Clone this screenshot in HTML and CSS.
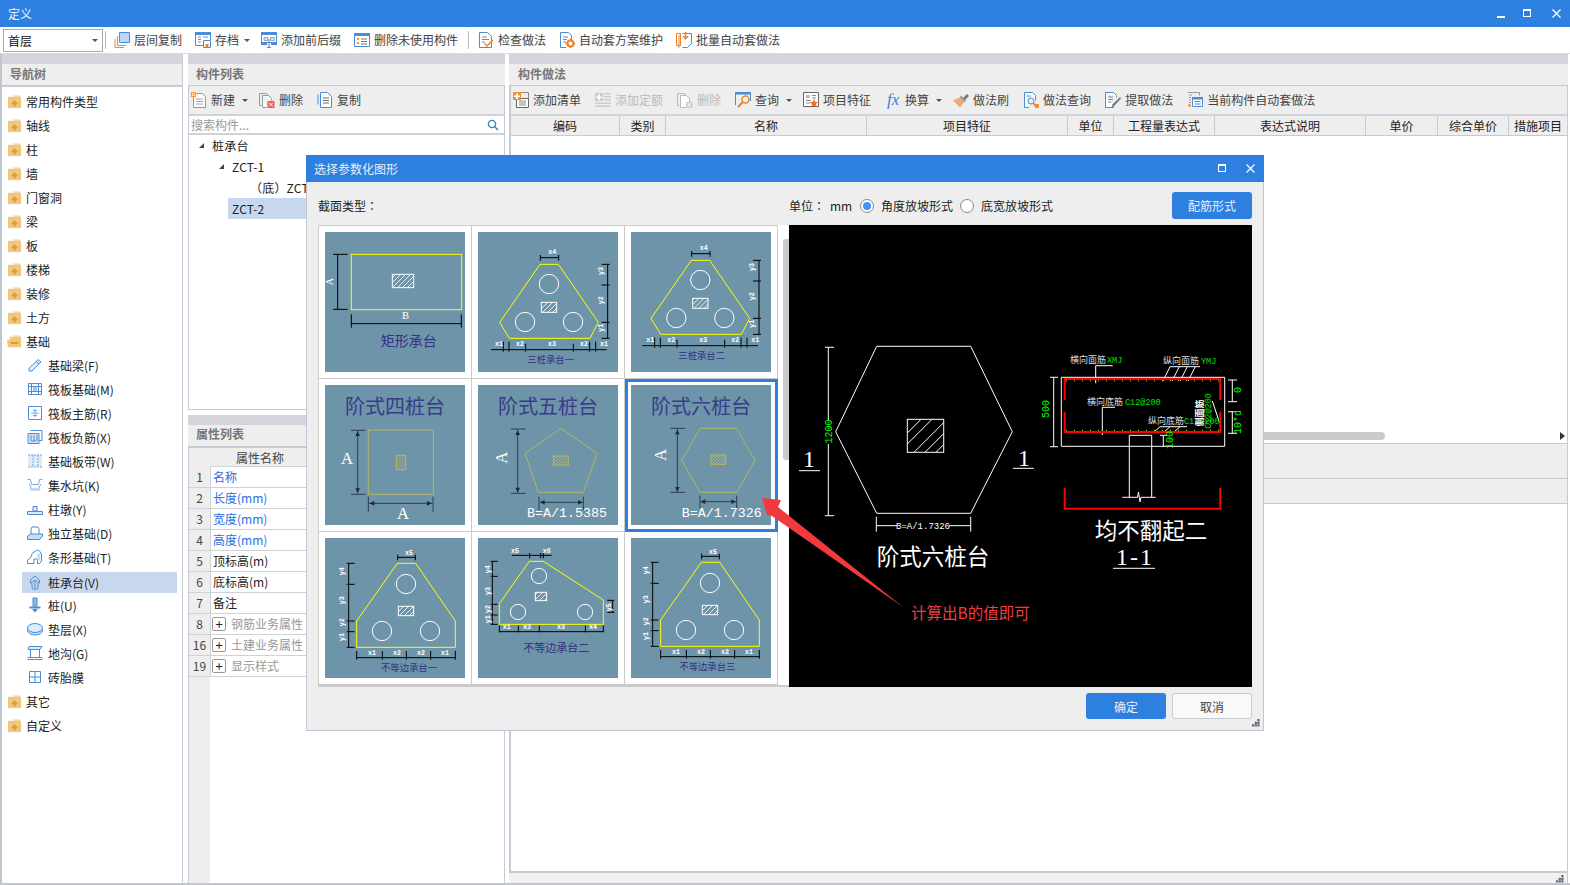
FILE: index.html
```html
<!DOCTYPE html>
<html lang="zh-CN">
<head>
<meta charset="utf-8">
<title>定义</title>
<link rel="stylesheet" href="styles.css">
</head>
<body>
<svg class="defs" width="0" height="0" aria-hidden="true">
  <defs>
    <pattern id="hatchW" width="15" height="15" patternUnits="userSpaceOnUse"><path d="M-2 17L17 -2" stroke="#fff" stroke-width="2.5"/></pattern>
    <pattern id="hatchO" width="9" height="9" patternUnits="userSpaceOnUse"><path d="M-2 11L11 -2" stroke="#b8ba55" stroke-width="2.5"/></pattern>
    <pattern id="hatchV" width="9" height="9" patternUnits="userSpaceOnUse"><path d="M-2 -2L11 11" stroke="#b8ba55" stroke-width="2.5"/></pattern>

    <!-- tree icons -->
    <symbol id="fplus" viewBox="0 0 16 16"><path d="M7 1.5h7v1.5H7z" fill="#f3d596"/><path d="M1 3h14v12H1z" fill="#efc67c"/><path d="M7 7h2v2h2v2H9v2H7v-2H5V9h2z" fill="#d39a2c"/></symbol>
    <symbol id="fminus" viewBox="0 0 16 16"><path d="M7 1.5h7v1.5H7z" fill="#f3d596"/><path d="M3 3h12v11H1L0 6h3z" fill="#efc67c"/><path d="M4 8.5h8v2H4z" fill="#d39a2c"/></symbol>
    <symbol id="beam" viewBox="0 0 16 16"><path d="M2 11.5L11 2.5l3 2.5-9 9H2zM9 4.5l3 2.5" fill="#dfeafa" stroke="#4a8cd8"/></symbol>
    <symbol id="raft" viewBox="0 0 16 16"><path d="M1.5 2.5h13v11h-13zM4.5 2.5v11M11.5 2.5v11M1.5 5.5h13M1.5 10.5h13M7 5.500v5M9 5.500v5" fill="none" stroke="#4a8cd8"/></symbol>
    <symbol id="rmain" viewBox="0 0 16 16"><path d="M1.500 1.500h13v13h-13z" fill="#fff" stroke="#4a8cd8"/><path d="M8 4v8M4 8h8M6 5.500h4M6 10.500h4" fill="none" stroke="#7aa8e0"/></symbol>
    <symbol id="rneg" viewBox="0 0 16 16"><path d="M1 4.500h11v10H1z" fill="#d4e3f7" stroke="#4a8cd8"/><path d="M3.500 1.500H15v10h-3" fill="none" stroke="#4a8cd8"/><path d="M4 6v6h5M7 6v6M10 6v6" fill="none" stroke="#4a8cd8"/></symbol>
    <symbol id="band" viewBox="0 0 16 16"><path d="M1 2h14v12H1z" fill="#dfeafa"/><path d="M1 2h14M1 14h14M6 2v12M11 2v12" fill="none" stroke="#7aa8e0" stroke-dasharray="2 1"/></symbol>
    <symbol id="sump" viewBox="0 0 16 16"><path d="M.5 2.500h3l1 5h7l1-5h3M2 7l3 5h6l3-5" fill="none" stroke="#7aa8e0"/><path d="M2 11l2 3h8l2-3z" fill="#c9d6e8"/></symbol>
    <symbol id="pier" viewBox="0 0 16 16"><path d="M6 5.500h4V10H6zM.5 10.500h15v3H.5z" fill="#dfeafa" stroke="#4a8cd8"/></symbol>
    <symbol id="iso" viewBox="0 0 16 16"><path d="M5 2h6l1 2v6H4V4z" fill="#fff" stroke="#4a8cd8"/><path d="M.5 11l3-2h12v2l-3 3.500H.5z" fill="#c8dcf6" stroke="#4a8cd8"/></symbol>
    <symbol id="strip" viewBox="0 0 16 16"><path d="M.5 14.500V11l3-2 2-5 5-3 2 1 2 3v7l-2 2.500h-2V10H7v4.500z" fill="#fff" stroke="#4a8cd8"/><path d="M10.500 4l3 1v6l-3 1z" fill="#c8dcf6"/></symbol>
    <symbol id="cap" viewBox="0 0 16 16"><path d="M8 1l4.500 4v3L8 5 3.500 8V5z" fill="#c8dcf6" stroke="#4a8cd8"/><path d="M5 8v5l2 2M8 5v10M11 8v5l-2 2" fill="none" stroke="#4a8cd8"/></symbol>
    <symbol id="pile" viewBox="0 0 16 16"><path d="M6 1h4v8H6z" fill="#8db8ec" stroke="#4a8cd8"/><path d="M2.500 10.500h11" stroke="#4a8cd8" stroke-width="2"/><path d="M5 12h6l-3 3.500z" fill="#4a8cd8"/></symbol>
    <symbol id="cushion" viewBox="0 0 16 16"><ellipse cx="8" cy="9.500" rx="7.500" ry="4.500" fill="#c8dcf6" stroke="#4a8cd8"/><ellipse cx="8" cy="7" rx="7.500" ry="4.500" fill="#dfeafa" stroke="#4a8cd8"/></symbol>
    <symbol id="trench" viewBox="0 0 16 16"><path d="M2 1.500h13l-2 3H1zM3.500 4.500v8M12.500 4.500v8M.5 14.500h15M.5 12.500h15" fill="#dfeafa" stroke="#4a8cd8"/></symbol>
    <symbol id="brick" viewBox="0 0 16 16"><path d="M2.500 2.500h11v11h-11zM8 2.500v11M2.500 8h11" fill="#fff" stroke="#4a8cd8"/></symbol>

    <!-- toolbar icons -->
    <symbol id="tfloor" viewBox="0 0 16 16"><path d="M5.500 .5h10v10h-10z" fill="#b9d5fb" stroke="#4a8cd8"/><path d="M3.500 4v9.500H12M1 7v8.500h9" fill="none" stroke="#e8873a"/></symbol>
    <symbol id="tsave" viewBox="0 0 16 16"><path d="M.5 .5h15v13H.5z" fill="#fff" stroke="#4a8cd8"/><path d="M0 0h16v3H0z" fill="#4a8cd8"/><path d="M3 5h3M3 7.500h3M3 10h3M8 5h5" stroke="#888"/><path d="M8 8h8v8H8z" fill="#fff"/><path d="M8.500 8.500h7v7h-7z" fill="#fff" stroke="#4a8cd8"/><path d="M10.500 12h3v3.500h-3z" fill="#f0802a"/></symbol>
    <symbol id="taffix" viewBox="0 0 16 16"><path d="M.5 .5h15v10H.5z" fill="#fff" stroke="#4a8cd8"/><path d="M0 0h16v3H0z" fill="#4a8cd8"/><path d="M3 5.500h4v3H3zM9.500 5.500h4v3h-4z" fill="#cfe0f7" stroke="#777" stroke-width=".6"/><path d="M8 7v8M6 15.500h4" stroke="#4a8cd8"/><path d="M0 10h6v3H0zM10 10h6v3h-6z" fill="#4a8cd8"/></symbol>
    <symbol id="tunused" viewBox="0 0 16 16"><path d="M.5 1.500h15v13H.5z" fill="#fff" stroke="#4a8cd8"/><path d="M0 1h16v3H0z" fill="#4a8cd8"/><path d="M3 6h2v2H3zM3 10h2v2H3z" fill="#f0902a"/><path d="M7 7h6M7 9.500h6M7 12h6" stroke="#777"/></symbol>
    <symbol id="tcheck" viewBox="0 0 16 16"><path d="M1.500 .5h8l4 4v11h-12z" fill="#fff" stroke="#4a8cd8"/><path d="M4 5h5M4 7.500h7M4 10h3" stroke="#888"/><path d="M6.500 11.500l2.500 2.500 6-6" fill="none" stroke="#f0802a" stroke-width="1.500"/></symbol>
    <symbol id="tauto" viewBox="0 0 16 16"><path d="M1.500 .5h8l3 3V9M7 15.500H1.500V.5" fill="#fff" stroke="#4a8cd8"/><path d="M4 5h5M4 7.500h4M4 10h3" stroke="#888"/><circle cx="11.500" cy="11.500" r="3" fill="#fff" stroke="#f0802a" stroke-width="2"/><path d="M11.500 6.500v2M11.500 14.500v2M6.500 11.500h2M14.500 11.500h2" stroke="#f0802a" stroke-width="1.500"/></symbol>
    <symbol id="tbatch" viewBox="0 0 16 16"><path d="M.5 1.500h4v12h-4zM3 15.500V3" fill="none" stroke="#f0802a"/><path d="M6.500 15.500h5l4-4v-10h-9" fill="#fff" stroke="#4a8cd8"/><path d="M9.500 0v6M7 4l2.500 3L12 4" fill="none" stroke="#f0802a" stroke-width="1.400"/></symbol>
    <symbol id="tnew" viewBox="0 0 16 16"><path d="M2.500 3.500V15.500h12V5l-3-3.500H5" fill="#fbfbfb" stroke="#999"/><path d="M5 7h7M5 9.500h7M5 12h7" stroke="#aaa"/><path d="M0 0h5v5H0z" fill="#f29a3a"/><path d="M1 1h1v1H1zM3 1h1v1H3zM2 2h1v1H2zM1 3h1v1H1zM3 3h1v1H3z" fill="#fff"/></symbol>
    <symbol id="tdel" viewBox="0 0 16 16"><path d="M.5 1.500h7l2 2M2.500 13.500H.5v-12" fill="none" stroke="#999"/><path d="M3.500 3.500h6l3 3v2M7.500 15.500h-4v-12" fill="#fff" stroke="#999"/><path d="M8.500 9h7v7h-7z" fill="#e55"/><path d="M10 10.500l4 4M14 10.500l-4 4" stroke="#fff"/></symbol>
    <symbol id="tcopy" viewBox="0 0 16 16"><path d="M1 2.500v10" stroke="#4a8cd8" fill="none"/><path d="M3.500 .5h7l4 4v11h-11z" fill="#fff" stroke="#4a8cd8"/><path d="M6 6h6M6 8.500h6M6 11h6" stroke="#6a6a6a"/></symbol>
    <symbol id="tlist" viewBox="0 0 16 16"><path d="M3.500 6.500h12v9h-12z" fill="#fff" stroke="#666"/><path d="M8 .5h7.500v6M6 9h7M6 11h7M6 13h7" fill="none" stroke="#888"/><path d="M0 0h8v8H0z" fill="#f0902a"/><path d="M3 1.500h2v2h2v1.500H5v2H3V5H1V3.500h2z" fill="#fff"/></symbol>
    <symbol id="tquota" viewBox="0 0 16 16"><path d="M0 1h8v8H0z" fill="#ccc"/><path d="M3 2.500h2v2h2V6H5v2H3V6H1V4.500h2z" fill="#fff"/><path d="M9 1h7v1.500H9zM9 4h7v1.500H9zM9 7h7v1.500H9zM0 10.500h16V12H0zM0 13.500h16V15H0z" fill="#ccc"/></symbol>
    <symbol id="tdelg" viewBox="0 0 16 16"><path d="M.5 1.500h7l2 2M2.500 13.500H.5v-12" fill="none" stroke="#bbb"/><path d="M3.500 3.500h6l3 3v9h-9z" fill="#fff" stroke="#bbb"/><path d="M9 10h6.500v6H9z" fill="#ccc"/><path d="M10.500 11l3.500 4M14 11l-3.500 4" stroke="#fff"/></symbol>
    <symbol id="tquery" viewBox="0 0 16 16"><path d="M.5 13V.5h15V9" fill="none" stroke="#4a8cd8"/><path d="M0 0h16v2.500H0z" fill="#4a8cd8"/><circle cx="10.500" cy="7.500" r="3.500" fill="#fff" stroke="#f0802a" stroke-width="1.500"/><path d="M8 10l-5 5" stroke="#f0802a" stroke-width="2"/></symbol>
    <symbol id="tfeature" viewBox="0 0 16 16"><path d="M.5 .5h15v14H.5z" fill="#fff" stroke="#666"/><path d="M3 3h4v3H3z" fill="#bbb"/><path d="M9 3.500h4M9 6h4M3 8.500h5M3 11h4" stroke="#888"/><path d="M11 7l1.400 3h3l-2.400 2 1 3.500L11 13.600 8 15.500l1-3.500-2.400-2h3z" fill="#f0702a"/></symbol>
    <symbol id="tbrush" viewBox="0 0 16 16"><path d="M10 6l4-4 2 2-4 4z" fill="#777"/><path d="M8 3.500l5 5-1.500 2-5-5z" fill="#999"/><path d="M6.500 5.500l4.500 4.500L7 15.500 0 8.500z" fill="#f4a57c"/></symbol>
    <symbol id="tqdoc" viewBox="0 0 16 16"><path d="M1.500 .5h8l3 3v5M6 15.500H1.500V.5" fill="#fff" stroke="#4a8cd8"/><path d="M4 4h4" stroke="#888"/><circle cx="8" cy="9" r="3" fill="#e7f0fb" stroke="#4a8cd8"/><path d="M10 11l4 4" stroke="#f0802a" stroke-width="2"/><path d="M12 12h4v4h-4z" fill="#f0902a"/></symbol>
    <symbol id="textract" viewBox="0 0 16 16"><path d="M.5 .5h8l3 3v2M9 15.500H.5V.5" fill="#fff" stroke="#4a8cd8"/><path d="M3 5h5M3 7.500h5M3 10h3" stroke="#888"/><path d="M15 5l1 1.500L9 14l-2 1 .5-2.500z" fill="#777"/><path d="M7.500 12.500l2 1.500-3 1.500z" fill="#2aa6d8"/></symbol>
    <symbol id="tcur" viewBox="0 0 16 16"><path d="M.5 .5h12v3" fill="none" stroke="#999"/><path d="M2 3h3M2 5.500h2M2 8h2M2 10.500h2" stroke="#999"/><path d="M1 12.500h3v2H1z" fill="#f0902a"/><path d="M5.500 5.500h10v9h-10z" fill="#fff" stroke="#4a8cd8"/><path d="M5 5h11v2.500H5z" fill="#4a8cd8"/><path d="M7.500 9.500h6M7.500 12h6" stroke="#4a8cd8"/></symbol>

    <!-- re-used thumbnail drawings -->
    <g id="tri3">
      <path class="y" d="M675 118H730L850 292 825 340H583L554 292Z"/>
      <circle class="w" cx="702" cy="177" r="29"/><circle class="w" cx="630" cy="291" r="29"/><circle class="w" cx="774" cy="291" r="29"/>
      <rect class="h" x="679" y="232" width="46" height="30"/>
      <path class="k" d="M676 98H731M676 90V107M731 90V107M878 118V340M860 118H884M860 180H884M860 292H884M860 340H884M528 374H875M565 350V380M582 350V380M632 356V380M775 356V380M824 350V380M842 350V380"/>
      <text class="dim" x="700" y="88">x4</text>
      <text class="dim" transform="translate(864 150) rotate(-90)">y3</text>
      <text class="dim" transform="translate(864 238) rotate(-90)">y2</text>
      <text class="dim" transform="translate(864 320) rotate(-90)">y1</text>
      <text class="dim" x="540" y="364">x1</text><text class="dim" x="603" y="364">x2</text><text class="dim" x="699" y="364">x3</text><text class="dim" x="795" y="364">x2</text><text class="dim" x="855" y="364">x1</text>
    </g>
    <g id="uneq">
      <path class="y" d="M247 115H302L421 288V367H125V288Z"/>
      <circle class="w" cx="273" cy="177" r="29"/><circle class="w" cx="201" cy="318" r="29"/><circle class="w" cx="345" cy="318" r="29"/>
      <rect class="h" x="250" y="244" width="46" height="28"/>
      <path class="k" d="M248 97H301M248 89V106M301 89V106M101 115V367M95 115H119M95 178H119M95 288H119M95 320H119M95 367H119M125 398H421M125 378V404M202 378V404M274 378V404M347 378V404M421 378V404"/>
      <text class="dim" x="270" y="89">x5</text>
      <text class="dim" transform="translate(87 151) rotate(-90)">y4</text>
      <text class="dim" transform="translate(87 238) rotate(-90)">y3</text>
      <text class="dim" transform="translate(87 304) rotate(-90)">y2</text>
      <text class="dim" transform="translate(87 348) rotate(-90)">y1</text>
      <text class="dim" x="159" y="389">x1</text><text class="dim" x="234" y="389">x2</text><text class="dim" x="306" y="389">x2</text><text class="dim" x="378" y="389">x1</text>
    </g>
  </defs>
</svg>

<div class="app">
  <header class="titlebar">
    <span class="title-text">定义</span>
    <div class="win-btns">
      <span class="win-min"></span>
      <span class="win-max"></span>
      <svg class="win-x" viewBox="0 0 9 9"><path d="M.5 .5l8 8M8.500 .5l-8 8" stroke="#fff" stroke-width="1.300"/></svg>
    </div>
  </header>

  <div class="toolbar">
    <div class="combo"><span>首层</span><i class="caret"></i></div>
    <i class="tb-sep first"></i>
    <div class="tb-item"><svg class="ic"><use href="#tfloor"/></svg>层间复制</div>
    <div class="tb-item"><svg class="ic"><use href="#tsave"/></svg>存档<i class="caret after"></i></div>
    <div class="tb-item"><svg class="ic"><use href="#taffix"/></svg>添加前后缀</div>
    <div class="tb-item"><svg class="ic"><use href="#tunused"/></svg>删除未使用构件</div>
    <i class="tb-sep"></i>
    <div class="tb-item"><svg class="ic"><use href="#tcheck"/></svg>检查做法</div>
    <div class="tb-item"><svg class="ic"><use href="#tauto"/></svg>自动套方案维护</div>
    <div class="tb-item"><svg class="ic"><use href="#tbatch"/></svg>批量自动套做法</div>
  </div>

  <main class="main">
    <section class="panel nav">
      <div class="strip"></div>
      <div class="panel-head thick">导航树</div>
      <ul class="tree">
        <li class="node"><svg class="ic"><use href="#fplus"/></svg>常用构件类型</li>
        <li class="node"><svg class="ic"><use href="#fplus"/></svg>轴线</li>
        <li class="node"><svg class="ic"><use href="#fplus"/></svg>柱</li>
        <li class="node"><svg class="ic"><use href="#fplus"/></svg>墙</li>
        <li class="node"><svg class="ic"><use href="#fplus"/></svg>门窗洞</li>
        <li class="node"><svg class="ic"><use href="#fplus"/></svg>梁</li>
        <li class="node"><svg class="ic"><use href="#fplus"/></svg>板</li>
        <li class="node"><svg class="ic"><use href="#fplus"/></svg>楼梯</li>
        <li class="node"><svg class="ic"><use href="#fplus"/></svg>装修</li>
        <li class="node"><svg class="ic"><use href="#fplus"/></svg>土方</li>
        <li class="node"><svg class="ic"><use href="#fminus"/></svg>基础</li>
        <li class="leaf"><svg class="ic"><use href="#beam"/></svg>基础梁(F)</li>
        <li class="leaf"><svg class="ic"><use href="#raft"/></svg>筏板基础(M)</li>
        <li class="leaf"><svg class="ic"><use href="#rmain"/></svg>筏板主筋(R)</li>
        <li class="leaf"><svg class="ic"><use href="#rneg"/></svg>筏板负筋(X)</li>
        <li class="leaf"><svg class="ic"><use href="#band"/></svg>基础板带(W)</li>
        <li class="leaf"><svg class="ic"><use href="#sump"/></svg>集水坑(K)</li>
        <li class="leaf"><svg class="ic"><use href="#pier"/></svg>柱墩(Y)</li>
        <li class="leaf"><svg class="ic"><use href="#iso"/></svg>独立基础(D)</li>
        <li class="leaf"><svg class="ic"><use href="#strip"/></svg>条形基础(T)</li>
        <li class="leaf active"><svg class="ic"><use href="#cap"/></svg>桩承台(V)</li>
        <li class="leaf"><svg class="ic"><use href="#pile"/></svg>桩(U)</li>
        <li class="leaf"><svg class="ic"><use href="#cushion"/></svg>垫层(X)</li>
        <li class="leaf"><svg class="ic"><use href="#trench"/></svg>地沟(G)</li>
        <li class="leaf"><svg class="ic"><use href="#brick"/></svg>砖胎膜</li>
        <li class="node"><svg class="ic"><use href="#fplus"/></svg>其它</li>
        <li class="node"><svg class="ic"><use href="#fplus"/></svg>自定义</li>
      </ul>
    </section>

    <div class="mid">
      <section class="panel comp-list">
        <div class="strip"></div>
        <div class="panel-head">构件列表</div>
        <div class="sub-tools">
          <div class="tb-item"><svg class="ic"><use href="#tnew"/></svg>新建<i class="caret after"></i></div>
          <div class="tb-item"><svg class="ic"><use href="#tdel"/></svg>删除</div>
          <div class="tb-item"><svg class="ic"><use href="#tcopy"/></svg>复制</div>
        </div>
        <div class="search"><span>搜索构件...</span>
          <svg class="search-ic" viewBox="0 0 12 12"><circle cx="5" cy="5" r="3.600" fill="none" stroke="#2f86c9" stroke-width="1.400"/><path d="M7.700 7.700l3.300 3.300" stroke="#2f86c9" stroke-width="1.600"/></svg>
        </div>
        <ul class="comp-tree">
          <li class="lv1"><i class="tri"></i>桩承台</li>
          <li class="lv2"><i class="tri"></i>ZCT-1</li>
          <li class="lv3">（底）ZCT-1</li>
          <li class="lv2b selected">ZCT-2</li>
        </ul>
      </section>

      <section class="panel prop-list">
        <div class="strip"></div>
        <div class="panel-head thick">属性列表</div>
        <div class="props">
          <div class="prop-nums">
            <div class="ph"></div>
            <div class="pn">1</div><div class="pn">2</div><div class="pn">3</div><div class="pn">4</div><div class="pn">5</div><div class="pn">6</div><div class="pn">7</div><div class="pn">8</div><div class="pn">16</div><div class="pn">19</div>
          </div>
          <div class="prop-vals">
            <div class="ph name">属性名称</div>
            <div class="pv blue">名称</div>
            <div class="pv blue">长度(mm)</div>
            <div class="pv blue">宽度(mm)</div>
            <div class="pv blue">高度(mm)</div>
            <div class="pv">顶标高(m)</div>
            <div class="pv">底标高(m)</div>
            <div class="pv">备注</div>
            <div class="pv group"><i class="plus">+</i>钢筋业务属性</div>
            <div class="pv group"><i class="plus">+</i>土建业务属性</div>
            <div class="pv group"><i class="plus">+</i>显示样式</div>
          </div>
        </div>
      </section>
    </div>

    <section class="panel work">
      <div class="strip"></div>
      <div class="panel-head">构件做法</div>
      <div class="work-tools">
        <div class="tb-item"><svg class="ic"><use href="#tlist"/></svg>添加清单</div>
        <div class="tb-item off"><svg class="ic"><use href="#tquota"/></svg>添加定额</div>
        <div class="tb-item off"><svg class="ic"><use href="#tdelg"/></svg>删除</div>
        <div class="tb-item"><svg class="ic"><use href="#tquery"/></svg>查询<i class="caret after wide"></i></div>
        <div class="tb-item"><svg class="ic"><use href="#tfeature"/></svg>项目特征</div>
        <div class="tb-item"><span class="fx">fx</span>换算<i class="caret after wide"></i></div>
        <div class="tb-item"><svg class="ic"><use href="#tbrush"/></svg>做法刷</div>
        <div class="tb-item"><svg class="ic"><use href="#tqdoc"/></svg>做法查询</div>
        <div class="tb-item"><svg class="ic"><use href="#textract"/></svg>提取做法</div>
        <div class="tb-item"><svg class="ic"><use href="#tcur"/></svg>当前构件自动套做法</div>
      </div>
      <div class="col-head">
        <span class="c1">编码</span><span class="c2">类别</span><span class="c3">名称</span><span class="c4">项目特征</span><span class="c5">单位</span><span class="c6">工程量表达式</span><span class="c7">表达式说明</span><span class="c8">单价</span><span class="c9">综合单价</span><span class="c10">措施项目</span>
      </div>
      <div class="work-body">
        <div class="hscroll"><i class="hthumb"></i><i class="harrow"></i></div>
      </div>
      <div class="work-band tall"></div>
      <div class="work-band"></div>
      <div class="work-lower"></div>
      <div class="status"><svg class="grip" viewBox="0 0 9 9"><path d="M6 0h2.500v2.500H6zM3 3h2.500v2.500H3zM6 3h2.500v2.500H6zM0 6h2.500v2.500H0zM3 6h2.500v2.500H3zM6 6h2.500v2.500H6z" fill="#667"/></svg></div>
    </section>
  </main>

  <div class="dialog">
    <div class="dlg-title">
      <span>选择参数化图形</span>
      <div class="dlg-btns">
        <i class="dlg-max"></i>
        <svg class="dlg-x" viewBox="0 0 9 9"><path d="M.5 .5l8 8M8.500 .5l-8 8" stroke="#fff" stroke-width="1.200"/></svg>
      </div>
    </div>
    <div class="dlg-top">
      <span class="sec-type">截面类型<span class="colon">：</span></span>
      <span class="unit">单位<span class="colon">：</span></span><span class="mm">mm</span>
      <label class="radio"><i class="dot on"></i>角度放坡形式</label>
      <label class="radio"><i class="dot"></i>底宽放坡形式</label>
      <button class="btn primary rebar">配筋形式</button>
    </div>
    <div class="dlg-mid">
      <div class="shape-list">
        <div class="shape-grid">
          <div class="cell"><svg class="thumb" viewBox="30 21 420 420">
            <rect class="y" x="109" y="88" width="331" height="166"/>
            <rect class="h" x="232" y="148" width="64" height="40"/>
            <path class="k" d="M68 88V253M54 88H98M54 253H98M109 296H439M109 268V308M439 268V308"/>
            <text class="mid-dim" transform="translate(55 170) rotate(-90)">A</text>
            <text class="mid-dim" x="272" y="283">B</text>
            <text class="lbl big" x="281" y="362">矩形承台</text>
          </svg></div>
          <div class="cell"><svg class="thumb" viewBox="489 21 420 420"><use href="#tri3"/>
            <text class="lbl" x="707" y="413">三桩承台一</text></svg></div>
          <div class="cell"><svg class="thumb" viewBox="494 33 420 420"><use href="#tri3"/>
            <text class="lbl" x="706" y="414">三桩承台二</text></svg></div>

          <div class="cell"><svg class="thumb" viewBox="30 480 420 420">
            <text class="ttl" x="240" y="566">阶式四桩台</text>
            <rect class="o" x="160" y="615" width="195" height="193"/>
            <rect class="hv" x="244" y="691" width="28" height="43"/>
            <path class="d" d="M128 617V806M108 616H152M108 808H152M162 835H352M160 815V860M354 815V860"/>
            <path class="a" d="M128 619l-7 14h14zM128 804l-7-14h14zM164 835l14-7v14zM350 835l-14-7v14z"/>
            <text class="cap" x="96" y="718">A</text><text class="cap" x="264" y="881">A</text>
          </svg></div>
          <div class="cell"><svg class="thumb" viewBox="489 480 420 420">
            <text class="ttl" x="699" y="566">阶式五桩台</text>
            <path class="o" d="M738 610L846 685 805 802H670L630 685Z"/>
            <rect class="ho" x="715" y="693" width="45" height="27"/>
            <path class="d" d="M608 614V804M588 612H632M588 805H632M675 832H803M672 815V855M805 815V855"/>
            <path class="a" d="M608 616l-7 14h14zM608 802l-7-14h14zM675 832l14-7v14zM803 832l-14-7v14z"/>
            <text class="cap" transform="translate(577 698) rotate(-90)">A</text>
            <text class="formula" x="756" y="876">B=A/1.5385</text>
          </svg></div>
          <div class="cell selected"><svg class="thumb" viewBox="948 480 420 420">
            <text class="ttl" x="1158" y="566">阶式六桩台</text>
            <path class="o" d="M1155 610H1265L1320 706 1265 802H1155L1100 706Z"/>
            <rect class="ho" x="1188" y="690" width="44" height="28"/>
            <path class="d" d="M1087 612V800M1066 610H1110M1066 802H1110M1157 830H1263M1155 812V850M1265 812V850"/>
            <path class="a" d="M1087 614l-7 14h14zM1087 800l-7-14h14zM1157 830l14-7v14zM1263 830l-14-7v14z"/>
            <text class="cap" transform="translate(1052 690) rotate(-90)">A</text>
            <text class="formula" x="1220" y="876">B=A/1.7326</text>
          </svg></div>

          <div class="cell"><svg class="thumb" viewBox="30 39 420 420"><use href="#uneq"/>
            <text class="lbl" x="282" y="438">不等边承台一</text></svg></div>
          <div class="cell"><svg class="thumb" viewBox="489 39 420 420">
            <path class="y" d="M643 109H685L865 225V298H553V236Z"/>
            <circle class="w" cx="672" cy="153" r="23"/><circle class="w" cx="609" cy="261" r="23"/><circle class="w" cx="810" cy="261" r="23"/>
            <rect class="h" x="661" y="202" width="34" height="25"/>
            <path class="k" d="M591 91H710M644 84V100M677 84V100M685 84V100M532 109V298M527 109H548M527 154H548M527 238H548M527 270H548M527 298H548M893 226V262M877 226H898M877 262H898M553 320H865M553 302V322M610 302V322M673 302V322M811 302V322M865 302V322"/>
            <text class="dim" x="600" y="84">x5</text><text class="dim" x="695" y="84">x6</text>
            <text class="dim" transform="translate(526 133) rotate(-90)">y4</text><text class="dim" transform="translate(526 198) rotate(-90)">y3</text><text class="dim" transform="translate(526 252) rotate(-90)">y2</text><text class="dim" transform="translate(526 283) rotate(-90)">y1</text><text class="dim" transform="translate(888 247) rotate(-90)">y5</text>
            <text class="dim" x="575" y="311">x1</text><text class="dim" x="636" y="311">x3</text><text class="dim" x="738" y="311">x3</text><text class="dim" x="834" y="311">x4</text>
            <text class="lbl wide" x="724" y="380">不等边承台二</text>
          </svg></div>
          <div class="cell"><svg class="thumb" viewBox="36 42 420 420"><use href="#uneq"/>
            <text class="lbl" x="265" y="438">不等边承台三</text></svg></div>
          <div class="cell"></div><div class="cell"></div><div class="cell"></div>
        </div>
        <div class="vscroll"><i class="vthumb"></i></div>
      </div>

      <svg class="cad" viewBox="789 225 463 462">
        <g class="cw">
          <path d="M876.700 346.300H970.700L1012.300 431.700 970.700 513.300H876.700L835.700 431.700Z"/>
          <rect x="907.300" y="419.300" width="36.400" height="33"/>
          <path d="M907.300 433L921 419.300M907.300 444L932 419.300M914 452.300L943.700 422.600M925 452.300L943.700 433.600M936 452.300L943.700 444.600"/>
          <path d="M828.300 347.300V515.700M825 347.300H834M825 515.700H834M876.300 525.700H970.700M876.300 516.700V531.700M970.700 516.700V531.700"/>
          <path d="M799 470.700H820M1013 468.300H1033.700"/>
          <path d="M1061.300 377.300H1224.700V446.300H1061.300ZM1053.700 377.300V446.700M1050 377.300H1058M1050 446.700H1058"/>
          <path d="M1232.300 380V401.700M1228 380H1237M1228 401.700H1237M1232.300 411.700V433.300M1228 411.700H1237M1228 433.300H1237"/>
          <path d="M1129.300 497.300V435.300H1151.700V497.300M1122.300 497.300H1137.500L1138.500 492 1140 502 1141 497.300H1155.700"/>
          <path d="M1113 568.300H1155"/>
          <path d="M1095.700 383.300V365.700H1112.700M1170 366.700H1200M1170 366.700L1163 381M1179.300 366.700L1172 381M1187.300 366.700L1180 381M1195.300 366.700L1188 381"/>
          <path d="M1102.300 435V407.300H1115M1160 426.700H1187M1160 426.700L1154 432M1170 426.700L1164 432M1180 426.700L1174 432"/>
          <path d="M1212.300 401L1219.700 423M1163.300 435.300V446.700M1160 435.300H1167"/>
        </g>
        <g class="cr">
          <path d="M1064.700 400V379H1220.300V400M1064.700 411.700V432H1220.300V411.700M1064.700 488V508.700H1220.300V488"/>
        </g>
        <path class="cdots" d="M1066 380.800H1220M1066 430.300H1220"/>
        <rect class="mask" x="824" y="420" width="9" height="24"/>
        <rect class="mask" x="897" y="520" width="52" height="12"/>
        <text class="cg v" transform="translate(832 431.500) rotate(-90)">1200</text>
        <text class="cn" x="923" y="529">B=A/1.7326</text>
        <text class="one" x="809" y="467">1</text>
        <text class="one" x="1024" y="466">1</text>
        <text class="chn" x="933" y="565">阶式六桩台</text>
        <text class="chn" x="1151" y="539">均不翻起二</text>
        <text class="one wide" x="1135" y="565">1-1</text>
        <text class="cg v" transform="translate(1049 409) rotate(-90)">500</text>
        <text class="cg v" transform="translate(1241 390) rotate(-90)">0</text>
        <text class="cg v" transform="translate(1241 422) rotate(-90)">10*d</text>
        <text class="cg v" transform="translate(1173 440) rotate(-90)">100</text>
        <text class="cs" x="1070" y="363">横向面筋</text><text class="cgs" x="1107" y="363">XMJ</text>
        <text class="cs" x="1163" y="364">纵向面筋</text><text class="cgs" x="1201" y="364">YMJ</text>
        <text class="cs" x="1087" y="405">横向底筋</text><text class="cgs" x="1125" y="405">C12@200</text>
        <text class="cs" x="1148" y="424">纵向底筋</text><text class="cgs" x="1184" y="424">C12@200</text>
        <text class="cs v" transform="translate(1203 413) rotate(-90)">侧面筋</text>
        <text class="cgs v" transform="translate(1211 411) rotate(-90)">C12@200</text>
      </svg>
    </div>
    <div class="dlg-foot">
      <button class="btn primary ok">确定</button>
      <button class="btn plain">取消</button>
      <svg class="grip dlg-grip" viewBox="0 0 9 9"><path d="M6 0h2.500v2.500H6zM3 3h2.500v2.500H3zM6 3h2.500v2.500H6zM0 6h2.500v2.500H0zM3 6h2.500v2.500H3zM6 6h2.500v2.500H6z" fill="#667"/></svg>
    </div>
  </div>

  <svg class="note" viewBox="750 490 290 140">
    <polygon points="762,498 781,500 778,507 903.500,607.500 772,516 767,515" fill="#f23a3c"/>
    <text x="911" y="619">计算出B的值即可</text>
  </svg>
</div>
</body>
</html>
```

FILE: styles.css
```css
* { box-sizing: border-box; }
html, body { margin: 0; padding: 0; }
body { font-family: "Noto Sans CJK SC", "Noto Sans", sans-serif; font-size: 12px; color: #333; background: #fff; }
ul { list-style: none; margin: 0; padding: 0; }
i { font-style: normal; }
.defs { position: absolute; }

.app { position: relative; width: 1570px; height: 885px; overflow: hidden; display: flex; flex-direction: column; background: #fff; }

/* title */
.titlebar { height: 27px; flex: none; background: #2d7fe0; color: #fff; display: flex; align-items: center; padding: 0 0 1px 8px; }
.title-text { color: #e8f1fc; }
.win-btns { margin-left: auto; display: flex; align-items: center; gap: 21px; padding-right: 9px; }
.win-min { width: 8px; height: 2px; background: #fff; margin: 7px -3px 0 0; }
.win-max { width: 8px; height: 8px; border: 1px solid #fff; border-top-width: 2px; }
.win-x { width: 9px; height: 9px; }

/* main toolbar */
.toolbar { height: 27px; flex: none; display: flex; align-items: center; gap: 13px; padding-left: 3px; background: #fff; border-bottom: 1px solid #dadada; }
.combo { width: 100px; height: 23px; border: 1px solid #aaa; display: flex; align-items: center; padding: 0 4px; color: #111; margin-right: -11px; }
.combo .caret { margin-left: auto; }
.caret { display: inline-block; width: 0; height: 0; border: 3px solid transparent; border-top: 3px solid #555; border-bottom: 0; }
.caret.after { margin-left: 1px; margin-right: -2px; border-width: 3px 3px 0; }
.caret.after.wide { margin-left: 3px; margin-right: -3px; }
.tb-sep { width: 1px; height: 18px; background: #bbb; margin: 0 -4px 0 -3px; }
.tb-sep.first { margin: 0 -5px 0 0; }
.tb-item { display: flex; align-items: center; gap: 4px; color: #444; white-space: nowrap; line-height: 16px; }
.ic { width: 16px; height: 16px; flex: none; }
.toolbar .tb-item { background: #fcfcfc; border-radius: 3px; height: 20px; }
.tb-item.off { color: #bbb; }
.fx { width: 16px; font-family: "Liberation Serif", serif; font-style: italic; font-size: 17px; color: #3f82cf; line-height: 16px; text-align: center; }

/* layout */
.main { flex: 1; min-height: 0; display: flex; background: #fff; border-left: 2px solid #c1c7d0; border-bottom: 2px solid #c1c7d0; }
.panel { display: flex; flex-direction: column; min-height: 0; }
.strip { height: 10px; flex: none; background: #d3d5da; }
.panel-head { height: 22px; flex: none; background: #eee; color: #777; font-weight: 700; padding-left: 8px; line-height: 20px; border-bottom: 1px solid #c6cad2; }
.panel-head.thick { height: 23px; border-bottom-width: 2px; }

/* navigation */
.nav { width: 181px; flex: none; border-right: 1px solid #c6cad2; }
.tree { padding-top: 2px; flex: 1; color: #222; }
.node, .leaf { height: 24px; display: flex; align-items: center; white-space: nowrap; }
.node { padding-left: 5px; gap: 4px; }
.node .ic { width: 15px; height: 15px; }
.leaf { padding-left: 25px; gap: 5px; position: relative; }
.leaf.active { margin-left: 20px; margin-right: 5px; padding-left: 5px; height: 21px; margin-top: 3px; background: #c7d7ee; }

/* middle */
.mid { width: 317px; flex: none; margin-left: 5px; display: flex; flex-direction: column; }
.comp-list { height: 356px; flex: none; border: 1px solid #c6cad2; border-width: 0 1px 1px; }
.comp-list .strip, .comp-list .panel-head { margin: 0 -1px; }
.sub-tools { height: 30px; flex: none; background: #eee; display: flex; align-items: center; gap: 14px; padding-left: 2px; border-bottom: 2px solid #cfd2d8; }
.sub-tools .caret.after { margin-left: 3px; margin-right: -3px; }
.search { height: 19px; flex: none; display: flex; align-items: center; justify-content: space-between; padding: 0 5px 0 2px; color: #999; border-bottom: 2px solid #cfd2d8; }
.search-ic { width: 12px; height: 12px; }
.comp-tree { color: #222; flex: 1; overflow: hidden; letter-spacing: .2px; }
.comp-tree li { height: 21px; display: flex; align-items: center; white-space: nowrap; }
.tri { width: 0; height: 0; margin-right: 8px; border-left: 5px solid transparent; border-bottom: 5px solid #444; }
.lv1 { padding-left: 10px; }
.lv2 { padding-left: 30px; }
.lv3 { padding-left: 61px; }
.lv2b { margin-left: 39px; padding-left: 4px; }
.selected { background: #c7d7ee; }

.prop-list { flex: 1; min-height: 0; margin-top: 5px; border: 1px solid #c6cad2; border-width: 0 1px; }
.prop-list .strip, .prop-list .panel-head { margin: 0 -1px; }
.prop-list .panel-head { line-height: 18px; }
.props { flex: 1; display: flex; min-height: 0; }
.prop-nums { width: 21px; flex: none; background: #eee; }
.prop-vals { flex: 1; }
.ph { height: 19px; background: #eee; border-bottom: 1px solid #cfd2d8; }
.ph.name { padding-left: 26px; line-height: 20px; color: #444; }
.prop-nums .ph { border-bottom: 0; }
.pn { height: 21px; line-height: 20px; text-align: center; border-bottom: 1px solid #cfd2d8; color: #444; }
.pv { height: 21px; line-height: 20px; padding-left: 2px; border-bottom: 1px solid #cfd2d8; border-left: 1px solid #cfd2d8; color: #222; white-space: nowrap; overflow: hidden; }
.pv.blue { color: #2a6ee0; }
.pv.group { color: #999; display: flex; align-items: center; gap: 5px; padding-left: 1px; }
.plus { width: 14px; height: 14px; border: 1px solid #999; border-radius: 2px; color: #222; text-align: center; line-height: 11px; font-size: 13px; flex: none; }

/* right */
.work { flex: 1; min-width: 0; margin-left: 4px; margin-right: 2px; border-left: 2px solid #c6cad2; border-right: 1px solid #c6cad2; }
.work .strip, .work .panel-head { margin-left: -2px; margin-right: -1px; }
.work .panel-head { padding-left: 9px; }
.work-tools { height: 30px; flex: none; background: #eee; display: flex; align-items: center; gap: 14px; padding-left: 2px; border-bottom: 2px solid #cfd2d8; }
.col-head { height: 20px; flex: none; background: #eee; display: flex; border-bottom: 1px solid #c6cad2; color: #222; }
.col-head span { text-align: center; line-height: 20px; border-right: 1px solid #c6cad2; white-space: nowrap; flex: none; }
.c1 { width: 109px; } .c2 { width: 46px; } .c3 { width: 201px; } .c4 { width: 201px; } .c5 { width: 46px; }
.c6 { width: 101px; } .c7 { width: 151px; } .c8 { width: 72px; } .c9 { width: 71px; } .c10 { width: 58px; border-right: 0 !important; }
.work-body { height: 307px; flex: none; display: flex; align-items: flex-end; padding-bottom: 3px; background: #fff; }
.hscroll { flex: 1; height: 8px; position: relative; }
.hthumb { position: absolute; left: 8px; width: 866px; top: 0; height: 8px; border-radius: 4px; background: #cbcbcb; }
.harrow { position: absolute; right: 2px; top: 0; width: 0; height: 0; border: 4px solid transparent; border-left: 5px solid #333; border-right: 0; }
.work-band { height: 26px; flex: none; background: #eee; border-top: 1px solid #c6cad2; border-bottom: 1px solid #c6cad2; }
.work-band.tall { height: 35px; border-bottom: 0; }
.work-lower { flex: 1; background: #fff; }
.status { height: 12px; flex: none; background: #f1f1f1; border-top: 2px solid #c6cad2; margin-left: -2px; display: flex; justify-content: flex-end; align-items: flex-end; padding-right: 3px; }
.grip { width: 8px; height: 8px; display: block; }

/* dialog */
.dialog { position: absolute; left: 306px; top: 155px; width: 958px; height: 576px; background: #eee; border: 1px solid #c0c6d4; border-top: 0; display: flex; flex-direction: column; }
.dlg-title { height: 27px; flex: none; margin: 0 -1px; background: #2d7fe0; color: #e8f1fc; display: flex; align-items: center; padding: 0 0 1px 8px; }
.dlg-btns { margin-left: auto; display: flex; align-items: center; gap: 20px; padding-right: 9px; }
.dlg-max { width: 8px; height: 8px; border: 1px solid #fff; border-top-width: 2px; }
.dlg-x { width: 9px; height: 9px; }
.dlg-top { height: 43px; flex: none; display: flex; align-items: center; padding: 4px 11px 0 11px; color: #222; }
.sec-type { width: 471px; }
.colon { display: inline-block; width: 12px; text-align: center; font-family: "Noto Sans CJK TC", "Noto Sans CJK SC", sans-serif; }
.unit { margin-right: 5px; width: 36px; }
.mm { width: 30px; font-size: 12px; }
.radio { display: flex; align-items: center; gap: 7px; margin-right: 7px; }
.dot { width: 14px; height: 14px; border: 1px solid #888; border-radius: 50%; background: #fff; display: flex; align-items: center; justify-content: center; }
.dot.on::after { content: ""; width: 8px; height: 8px; border-radius: 50%; background: #3d95f5; }
.btn { font: inherit; border-radius: 3px; display: block; }
.primary { background: #2d7fe0; color: #e8f1fc; border: 0; }
.plain { background: #f9f9f9; color: #444; border: 1px solid #c8ccd4; width: 80px; height: 26px; }
.rebar { width: 80px; height: 27px; margin-left: auto; }
.ok { width: 80px; height: 26px; }

.dlg-mid { flex: none; height: 462px; margin-left: 11px; display: flex; }
.shape-list { width: 471px; height: 462px; flex: none; background: #fff; border-bottom: 2px solid #cbcbcb; overflow: hidden; position: relative; display: flex; }
.shape-grid { display: grid; grid-template-columns: repeat(3, 153px); grid-auto-rows: 153px; align-content: start; border-left: 1px solid #cbcbcb; border-top: 1px solid #cbcbcb; width: 460px; flex: none; margin-right: 5px; }
.cell { padding: 6px; border-right: 1px solid #cbcbcb; border-bottom: 1px solid #cbcbcb; background: #fff; }
.cell.selected { background: #fff; outline: 3px solid #2d7fe0; outline-offset: -3px; }
.vscroll { width: 6px; flex: none; position: relative; }
.vthumb { position: absolute; left: 0; top: 14px; width: 6px; height: 221px; background: #cbcbcb; border-radius: 3px 0 0 3px; }

.thumb { display: block; width: 140px; height: 140px; background: #6e94a9; }
.thumb text { text-anchor: middle; }
.y { fill: none; stroke: #ffff00; stroke-width: 3; }
.w { fill: none; stroke: #fff; stroke-width: 3; }
.k { fill: none; stroke: #000; stroke-width: 3; }
.h { fill: url(#hatchW); stroke: #fff; stroke-width: 3; }
.o { fill: none; stroke: #b2b65e; stroke-width: 3; }
.hv { fill: url(#hatchV); stroke: #b8ba55; stroke-width: 3; }
.ho { fill: url(#hatchO); stroke: #b8ba55; stroke-width: 3; }
.d { fill: none; stroke: #2e3f4c; stroke-width: 3; }
.a { fill: #1d2a35; }
.dim { font-family: "Liberation Mono", monospace; font-weight: 700; font-size: 20px; fill: #fff; }
.mid-dim { font-family: "Liberation Serif", serif; font-size: 32px; fill: #fff; }
.lbl { font-family: "Noto Sans CJK SC", sans-serif; font-size: 28px; fill: #34307f; }
.lbl.big { font-size: 42px; }
.lbl.wide { font-size: 33px; }
.ttl { font-family: "Noto Sans CJK SC", sans-serif; font-size: 60px; fill: #393c8a; }
.cap { font-family: "Liberation Serif", serif; font-size: 50px; fill: #fff; }
.formula { font-family: "Liberation Mono", monospace; font-size: 40px; fill: #fff; }

.cad { width: 463px; height: 462px; flex: none; background: #000; display: block; }
.cw { fill: none; stroke: #fff; stroke-width: 1; }
.cr { fill: none; stroke: #ff0000; stroke-width: 2; }
.cdots { fill: none; stroke: #e6e600; stroke-width: 1; stroke-dasharray: 1 7; }
.mask { fill: #000; }
.cg { font-family: "Liberation Mono", monospace; font-size: 10px; fill: #00ff00; }
.cad text.v { text-anchor: middle; }
.cn { font-family: "Liberation Mono", monospace; font-size: 9px; fill: #fff; text-anchor: middle; }
.one { font-family: "Liberation Serif", serif; font-size: 24px; fill: #fff; text-anchor: middle; }
.one.wide { letter-spacing: 2px; }
.chn { font-family: "Noto Sans CJK SC", sans-serif; font-size: 22.500px; fill: #fff; text-anchor: middle; }
.cs { font-family: "Noto Sans CJK SC", sans-serif; font-size: 9px; fill: #ddd; }
.cs.v { font-weight: 700; fill: #fff; }
.cgs { font-family: "Liberation Mono", monospace; font-size: 8.500px; fill: #00e000; }

.dlg-foot { flex: 1; display: flex; align-items: flex-start; justify-content: flex-end; gap: 6px; padding: 6px 11px 0 0; position: relative; }
.dlg-grip { position: absolute; right: 3px; bottom: 3px; }

/* annotation */
.note { position: absolute; left: 750px; top: 490px; width: 290px; height: 140px; }
.note text { font-family: "Noto Sans CJK SC", sans-serif; font-size: 15.500px; fill: #f03c3c; }
```
